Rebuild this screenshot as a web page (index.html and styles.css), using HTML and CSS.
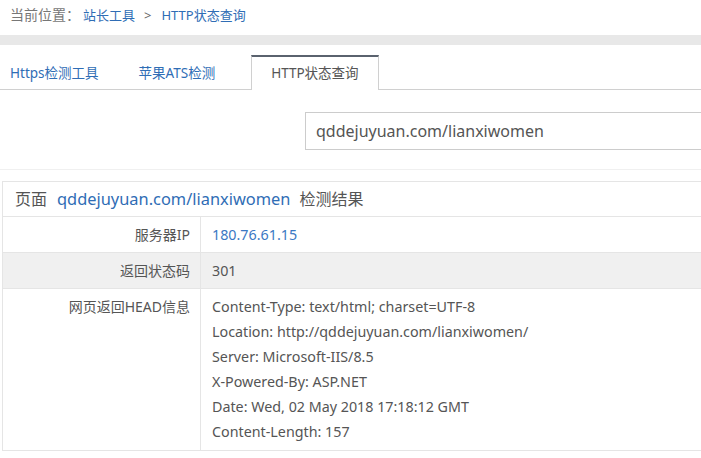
FILE: index.html
```html
<!DOCTYPE html>
<html lang="zh-CN">
<head>
<meta charset="utf-8">
<title>HTTP状态查询</title>
<link rel="stylesheet" href="styles.css">
</head>
<body>
<div class="crumb"><span class="crumb-label">当前位置：</span><a class="crumb-link">站长工具</a><span class="crumb-sep">&gt;</span><a class="crumb-link">HTTP状态查询</a></div>
<div class="graybar"></div>
<div class="tabs">
  <a class="tab tab-first">Https检测工具</a>
  <a class="tab">苹果ATS检测</a>
  <a class="tab tab-active">HTTP状态查询</a>
</div>
<div class="search">
  <div class="input">qddejuyuan.com/lianxiwomen</div>
</div>
<div class="result">
  <div class="result-head">页面<span class="head-url">qddejuyuan.com/lianxiwomen</span>检测结果</div>
  <div class="row">
    <div class="label">服务器IP</div>
    <div class="value value-blue">180.76.61.15</div>
  </div>
  <div class="row row-gray">
    <div class="label">返回状态码</div>
    <div class="value">301</div>
  </div>
  <div class="row row-multi">
    <div class="label">网页返回HEAD信息</div>
    <div class="value">
      <div class="line">Content-Type: text/html; charset=UTF-8</div>
      <div class="line">Location: http://qddejuyuan.com/lianxiwomen/</div>
      <div class="line">Server: Microsoft-IIS/8.5</div>
      <div class="line">X-Powered-By: ASP.NET</div>
      <div class="line">Date: Wed, 02 May 2018 17:18:12 GMT</div>
      <div class="line">Content-Length: 157</div>
    </div>
  </div>
</div>
</body>
</html>
```
FILE: styles.css
```css
html, body {
  margin: 0;
  padding: 0;
  background: #fff;
  overflow: hidden;
}
body {
  font-family: "Noto Sans", "Noto Sans CJK SC", sans-serif;
  color: #555;
  font-size: 13px;
}
a { text-decoration: none; }
.crumb {
  height: 35px;
  line-height: 30px;
  padding-left: 10px;
  font-size: 13px;
  color: #777;
}
.crumb-label { font-size: 14px; margin-right: 3px; }
.crumb-link { color: #2f6db5; }
.crumb-sep { margin: 0 10px 0 9px; color: #666; }
.graybar {
  height: 10px;
  background: #e8e8e8;
}
.tabs {
  margin-top: 10px;
  display: flex;
  height: 35px;
  border-bottom: 1px solid #d0d0d0;
  box-sizing: border-box;
}
.tab {
  display: block;
  padding: 0 20px;
  line-height: 36px;
  font-size: 13.5px;
  color: #2f6db5;
}
.tab-first { padding-left: 10px; }
.tab-active {
  margin-left: 16px;
  color: #555;
  background: #fff;
  border-top: 2px solid #5a626e;
  border-left: 1px solid #d0d0d0;
  border-right: 1px solid #d0d0d0;
  height: 35px;
  line-height: 33px;
  box-sizing: border-box;
  padding: 0 19px 0 19px;
}
.search {
  height: 80px;
  box-sizing: border-box;
  padding: 22px 0 0 305px;
  border-bottom: 1px solid #f0f0f0;
  overflow: hidden;
}
.input {
  width: 420px;
  height: 38px;
  box-sizing: border-box;
  border: 1px solid #ccc;
  padding-left: 10px;
  line-height: 36px;
  font-size: 16px;
  color: #555;
  white-space: nowrap;
}
.result {
  margin: 11px 0 0 2px;
  border: 1px solid #e5e5e5;
  border-right: none;
}
.result-head {
  height: 34px;
  line-height: 34px;
  padding-left: 12px;
  font-size: 16px;
  color: #555;
  border-bottom: 1px solid #e5e5e5;
}
.head-url {
  color: #2f6db5;
  font-size: 16.4px;
  margin: 0 9px 0 10px;
}
.row {
  display: flex;
  border-bottom: 1px solid #e5e5e5;
}
.row:last-child { border-bottom: none; }
.row-gray { background: #f0f0f0; }
.label {
  width: 198px;
  box-sizing: border-box;
  flex: none;
  text-align: right;
  padding-right: 10px;
  border-right: 1px solid #e5e5e5;
  line-height: 35px;
  font-size: 14px;
  color: #555;
}
.value {
  padding-left: 11px;
  line-height: 35px;
  font-size: 14.3px;
  color: #555;
}
.value-blue { color: #3a78c3; }
.row-multi .value { padding-top: 5px; padding-bottom: 6px; }
.line { line-height: 25px; }
```
